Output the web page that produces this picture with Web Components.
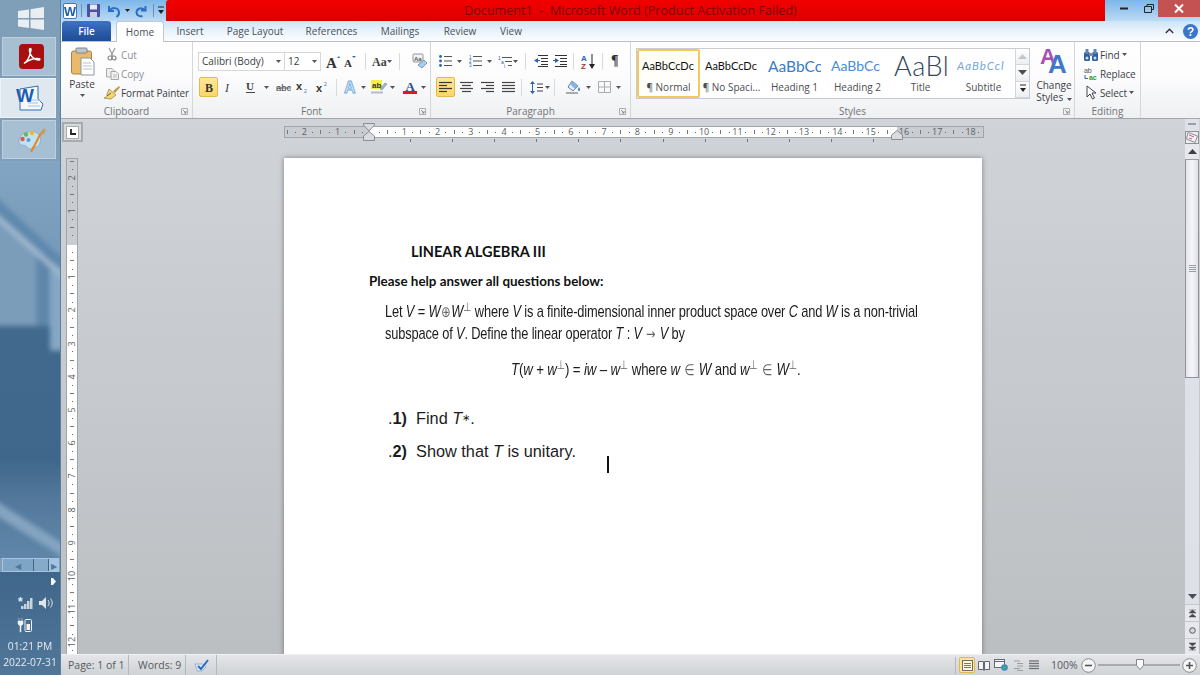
<!DOCTYPE html>
<html lang="en">
<head>
<meta charset="utf-8">
<title>Document1 - Microsoft Word</title>
<style>
html,body{margin:0;height:100%;overflow:hidden;background:#c8cbcf}
i{font-family:"Liberation Sans",sans-serif}
.perp{font-size:.72em;vertical-align:.5em;color:#666;line-height:0;font-style:normal;font-family:"DejaVu Sans",sans-serif;letter-spacing:0}
.sym{color:#666;font-family:"DejaVu Sans",sans-serif;font-size:.88em;letter-spacing:0;margin:0 1px}
.small{font-size:.6em;vertical-align:.35em;line-height:0}
</style>
</head>
<body>
<word-app>
  <desk-rail slot="rail"></desk-rail>
  <title-bar slot="main" caption="Document1  -  Microsoft Word (Product Activation Failed)"></title-bar>
  <ribbon-tabs slot="main"></ribbon-tabs>
  <word-ribbon slot="main"></word-ribbon>
  <work-space slot="main">
    <doc-page>
      <p class="title">LINEAR ALGEBRA III</p>
      <p class="ask">Please help answer all questions below:</p>
      <p class="math">Let <i>V</i> = <i>W</i><span class="sym">⊕</span><i>W</i><span class="perp">⊥</span> where <i>V</i> is a finite-dimensional inner product space over <i>C</i> and <i>W</i> is a non-trivial<br>subspace of <i>V</i>. Define the linear operator <i>T</i> : <i>V</i> <span class="sym">→</span> <i>V</i> by</p>
      <p class="math eq"><i>T</i>(<i>w</i> + <i>w</i><span class="perp">⊥</span>) = <i>iw</i> – <i>w</i><span class="perp">⊥</span> where <i>w</i> <span class="sym">∈</span> <i>W</i> and <i>w</i><span class="perp">⊥</span> <span class="sym">∈</span> <i>W</i><span class="perp">⊥</span>.</p>
      <p class="q one">.<b>1)</b>&nbsp; Find <i>T</i><span class="small">∗</span>.</p>
      <p class="q">.<b>2)</b>&nbsp; Show that <i>T</i> is unitary.</p>
    </doc-page>
  </work-space>
  <status-bar slot="main"></status-bar>
</word-app>

<script>
const SERIF = 'font-family="Liberation Serif" font-weight="bold"';
const SANS = 'font-family="Liberation Sans"';
const lines = (xs, c, sw = 1) => xs.map(([x1, y, x2]) => `<path d="M${x1} ${y}H${x2}" stroke="${c}" stroke-width="${sw}"/>`).join('');
const ICONS = {
  start: [26, 23, '<path fill="#fff" opacity=".82" d="M0 4 11 2.4V11H0zM12.5 2.2 26 0V11H12.5zM0 12.5H11V21L0 19.5zM12.5 12.5H26V23L12.5 21z"/>'],
  pdf: [25, 25, '<rect width="25" height="25" rx="4" fill="#a70f10"/><path fill="none" stroke="#fff" stroke-width="1.5" d="M5 19.5c3-2 6-7.500 7-13.500.3-2-1.600-2-1.600 0 0 5 4 9.500 9 10 2 .2 2-1.500 0-1.500-4-.2-10 1.500-14.400 5z"/>'],
  wordbig: [28, 28, `<path d="M4 5 22 2v13l5 5-2 6H4z" fill="#f4f8fc" stroke="#2f6db4"/><path d="M12 16h12M12 19h10M12 22h12" stroke="#a9c4e0"/><text x="0" y="18" font-size="19" ${SANS} font-weight="bold" fill="#1d5fb0">W</text>`],
  paint: [29, 26, '<path d="M2 15C1 8 10 3 18 5c6 2 7 8 4 13-2 3-5 1-7 3-2 2-4 0-6-2-2-1-6 0-7-4z" fill="#c2e1f1" stroke="#7aa9c7" stroke-width=".7"/><circle cx="5.500" cy="12" r="2.200" fill="#e2574c"/><circle cx="9" cy="7.500" r="2.200" fill="#69b944"/><circle cx="15" cy="6" r="2.200" fill="#f6b52e"/><circle cx="11.500" cy="13" r="2" fill="#5b9bd5"/><path d="M14 25 24 6" stroke="#e8851f" stroke-width="2"/><path d="M23 6l4-5 2 2-3 5z" fill="#c99a66"/>'],
  w: [14, 16, `<rect x=".5" y=".5" width="13" height="15" rx="1.500" fill="#fff" stroke="#3d79c2"/><text x="1" y="12.500" font-size="12" ${SANS} font-weight="bold" fill="#1b5cb0" textLength="12" lengthAdjust="spacingAndGlyphs">W</text>`],
  save: [13, 13, '<rect width="13" height="13" rx="1" fill="#4b4fa6"/><rect x="3" y=".5" width="7" height="5" fill="#e6ecf6"/><rect x="3" y="8" width="7" height="5" fill="#c9cfe0"/>'],
  undo: [12, 12, '<path d="M1 1v5h5M1.500 6C4 2 10 2 11 7c.4 2-1 4-2.500 5" fill="none" stroke="#2a6fc1" stroke-width="2"/>'],
  redo: [12, 12, '<path d="M10.500 1v4.500H6M10 5.500C7 2 2 3 1.500 7c-.2 3 3 5 6 4" fill="none" stroke="#2a6fc1" stroke-width="2"/>'],
  qcaret: [6, 8, '<path d="M0 0h6" stroke="#222"/><path d="M0 3h6L3 7z" fill="#222"/>'],
  caret: [5, 3, '<path d="M0 0h5L2.500 3z" fill="#555"/>'],
  min: [8, 3, '<rect width="8" height="2" y=".5" fill="#222"/>'],
  restore: [10, 9, '<path d="M3 2V.5h6.500v5H8M.5 2.500h7v6h-7z" fill="none" stroke="#222"/>'],
  close: [10, 9, '<path d="M1 .5 9 8.500M9 .5 1 8.500" stroke="#fff" stroke-width="2"/>'],
  chev: [9, 6, '<path d="M.8 5 4.500 1.300 8.200 5" fill="none" stroke="#333" stroke-width="1.400"/>'],
  help: [15, 15, `<circle cx="7.500" cy="7.500" r="7.500" fill="#3b76c8"/><text x="4" y="12" font-size="12" ${SANS} font-weight="bold" fill="#fff">?</text>`],
  paste: [24, 29, '<rect x=".5" y="4" width="20" height="23" rx="2" fill="#e9b96e" stroke="#a88246"/><rect x="5" y="1" width="11" height="5" rx="1" fill="#bfc5cc" stroke="#7e858c"/><path d="M10 11h9l4 4v13H10z" fill="#fff" stroke="#8c96a3"/><path d="M12 16h8M12 19h9M12 22h9" stroke="#b8c2cc"/>'],
  scissors: [10, 13, '<path d="M2 0 6 8M8 0 4 8" stroke="#9a9a9a" stroke-width="1.200"/><circle cx="3" cy="10" r="2" fill="none" stroke="#888" stroke-width="1.200"/><circle cx="7" cy="10" r="2" fill="none" stroke="#888" stroke-width="1.200"/>'],
  copy: [13, 12, '<path d="M.5.5H6l2 2V9H.5z" fill="#eee" stroke="#aaa"/><path d="M5 3.500h5l2.500 2.500v5.500H5z" fill="#f2f2f2" stroke="#a5a5a5"/><path d="M7 7h4M7 9h4" stroke="#bbb"/>'],
  brush: [16, 13, '<path d="M9 5 15 0l1 1.500L11 7z" fill="#c19a52"/><path d="M5 3 12 9 7 13 0 12c3-1 3-2 3-4z" fill="#f5d773" stroke="#8b7a3a" stroke-width=".7"/><path d="M3 10l4-3" stroke="#556"/>'],
  launch: [7, 7, '<path d="M.5.5h6v6h-6z" fill="none" stroke="#a8adb3"/><path d="M2 2l3 3M3 5h2V3" fill="none" stroke="#777" stroke-width=".8"/>'],
  grow: [14, 13, `<text x="0" y="13" font-size="15" ${SERIF} fill="#333">A</text><path d="M11 3l2-2 1 2z" fill="#2c6cb8"/>`],
  shrink: [12, 12, `<text x="0" y="12" font-size="11" ${SERIF} fill="#333">A</text><path d="M8 1h4l-2 2z" fill="#2c6cb8"/>`],
  aa: [14, 12, `<text x="0" y="11" font-size="12" ${SERIF} fill="#444">Aa</text>`],
  clear: [16, 15, `<rect x="1" y="0" width="10" height="8" rx="1" fill="#f4f4f4" stroke="#8f98a3"/><text x="2" y="7" font-size="6" ${SANS} font-weight="bold" fill="#555">Aa</text><path d="M6 11 12 6l3 3-5 5z" fill="#a9cdea" stroke="#7d99b4"/>`],
  b: [8, 11, `<text x="0" y="10" font-size="12" ${SERIF} fill="#333">B</text>`],
  it: [7, 11, `<text x="0" y="10" font-size="12" font-family="Liberation Serif" font-style="italic" fill="#444">I</text>`],
  u: [9, 12, `<text x="0" y="9" font-size="11" ${SERIF} fill="#444">U</text><path d="M0 11.500h9" stroke="#444"/>`],
  abc: [15, 10, `<text x="0" y="9" font-size="9.500" ${SANS} fill="#444">abc</text><path d="M0 6h15" stroke="#666"/>`],
  sub: [12, 11, `<text x="0" y="8" font-size="11" ${SANS} font-weight="bold" fill="#333">x</text><text x="8" y="11" font-size="5" ${SANS} fill="#3a73ba">2</text>`],
  sup: [12, 11, `<text x="0" y="10" font-size="11" ${SANS} font-weight="bold" fill="#333">x</text><text x="8" y="4" font-size="5" ${SANS} fill="#3a73ba">2</text>`],
  glow: [14, 14, `<text x="0" y="13" font-size="16" ${SANS} font-weight="bold" fill="#d6e9f8" stroke="#6fa8dc" stroke-width=".8">A</text>`],
  hilite: [16, 14, `<rect x="0" y="0" width="11" height="9" fill="#f5ef4e"/><text x="1" y="8" font-size="8" ${SANS} font-weight="bold" fill="#333">ab</text><path d="M9 9l5-6 2 1-5 6z" fill="#9ab6d4" stroke="#66809c" stroke-width=".5"/><path d="M0 12.500h12" stroke="#bbb" stroke-width="2"/>`],
  fcolor: [14, 14, `<text x="2.500" y="10.500" font-size="13" ${SERIF} fill="#1e4f91">A</text><rect y="11" width="14" height="3" fill="#e81418"/>`],
  bullets: [13, 12, '<circle cx="1.500" cy="1.500" r="1.400" fill="#2b63b0"/><circle cx="1.500" cy="6" r="1.400" fill="#2b63b0"/><circle cx="1.500" cy="10.500" r="1.400" fill="#2b63b0"/>' + lines([[5, 1.5, 13], [5, 6, 13], [5, 10.5, 13]], '#555')],
  numbers: [13, 12, `<text x="0" y="4" font-size="4.500" ${SANS} fill="#2b63b0">1</text><text x="0" y="8" font-size="4.500" ${SANS} fill="#2b63b0">2</text><text x="0" y="12" font-size="4.500" ${SANS} fill="#2b63b0">3</text>` + lines([[4, 1.5, 13], [4, 6, 13], [4, 10.5, 13]], '#555')],
  multi: [14, 13, `<text x="0" y="5" font-size="5" ${SANS} fill="#2b63b0">1</text><text x="3" y="9" font-size="5" ${SANS} fill="#2b63b0">a</text><text x="6" y="13" font-size="5" ${SANS} fill="#2b63b0">i</text>` + lines([[4, 2.5, 14], [7, 6.5, 14], [10, 10.5, 14]], '#555')],
  indentl: [14, 12, lines([[4, .5, 14], [7, 3.5, 14], [7, 6.5, 14], [7, 9.5, 14], [4, 11.5, 14]], '#333') + '<path d="M0 5.500 4 3v5z" fill="#2b63b0"/><path d="M3 5.500h3" stroke="#2b63b0"/>'],
  indentr: [14, 12, lines([[2, .5, 14], [7, 3.500, 14], [7, 6.500, 14], [7, 9.500, 14], [2, 11.500, 14]], '#333') + '<path d="M6 5.500 2 3v5z" fill="#2b63b0"/><path d="M0 5.500h3" stroke="#2b63b0"/>'],
  sort: [14, 15, `<text x="0" y="7" font-size="8" ${SANS} font-weight="bold" fill="#2b63b0">A</text><text x="0" y="15" font-size="8" ${SANS} font-weight="bold" fill="#a5342f">Z</text><path d="M11 0v13" stroke="#222"/><path d="M8 10h6l-3 5z" fill="#222"/>`],
  left: [13, 10, lines([[0, .5, 13], [0, 3.500, 8], [0, 6.500, 13], [0, 9.500, 8]], '#3a3a32', 1.200)],
  center: [13, 10, lines([[0, .5, 13], [2, 3.500, 11], [0, 6.500, 13], [2, 9.500, 11]], '#444', 1.200)],
  right: [13, 10, lines([[0, .5, 13], [5, 3.500, 13], [0, 6.500, 13], [5, 9.500, 13]], '#444', 1.200)],
  justify: [13, 10, lines([[0, .5, 13], [0, 3.500, 13], [0, 6.500, 13], [0, 9.500, 13]], '#444', 1.200)],
  spacing: [13, 13, '<path d="M0 3 2.500 0 5 3zM0 10l2.500 3L5 10z" fill="#2b63b0"/><path d="M2.500 3v7" stroke="#2b63b0"/>' + lines([[7, 3, 13], [7, 6.5, 13], [7, 10, 13]], '#444')],
  shade: [15, 14, '<path d="M6 1 12 6 7 11 2 7z" fill="#e8eef6" stroke="#5d7ea3"/><path d="M6 1 12 6 9 9 4 4z" fill="#86b4e2"/><path d="M13 7c1.500 2 1.500 4 0 4s-1.500-2 0-4z" fill="#4a88c7"/><path d="M0 13h12" stroke="#aaa" stroke-width="2"/>'],
  borders: [13, 12, '<path d="M.5.5h12v11H.5zM6.500.5v11M.5 6h12" fill="none" stroke="#a9adb1"/>'],
  aastyles: [26, 26, `<text font-size="22" ${SANS} font-weight="bold"><tspan x="0" y="16" fill="#a64fb5">A</tspan><tspan x="8" y="25" font-size="26" fill="#3f78c7">A</tspan></text>`],
  find: [14, 13, '<rect x="0" y="4" width="6" height="9" rx="1.500" fill="#2f5fa3"/><rect x="8" y="4" width="6" height="9" rx="1.500" fill="#2f5fa3"/><rect x="1.500" y="1" width="3" height="5" fill="#5c86bf"/><rect x="9.500" y="1" width="3" height="5" fill="#5c86bf"/><rect x="5" y="5" width="4" height="3" fill="#88a"/><circle cx="3" cy="10" r="1.500" fill="#cfe0f3"/><circle cx="11" cy="10" r="1.500" fill="#cfe0f3"/>'],
  replace: [14, 14, `<text x="0" y="6" font-size="7" ${SANS} fill="#555">ab</text><text x="5" y="13" font-size="7" ${SANS} font-weight="bold" fill="#2e9b2e">ac</text><path d="M1 8v3.500h3" fill="none" stroke="#2b63b0"/>`],
  select: [11, 15, '<path d="M1 1v11l3-3 2.500 5 2-1L6 8h4z" fill="#fff" stroke="#445"/>'],
  flag: [5, 7, '<path d="M0 0h2l3 3.500L2 7H0z" fill="#f3f5f7"/>'],
  signal: [15, 12, `<text x="0" y="9" font-size="12" ${SANS} font-weight="bold" fill="#e8edf2">*</text>` + [[3, 9], [6, 7], [9, 4], [12, 1]].map(([x, y]) => `<rect x="${x}" y="${y}" width="2.500" height="${12 - y}" fill="#c9d3dc"/>`).join('')],
  speaker: [14, 12, '<path d="M0 4h3l4-4v12L3 8H0z" fill="#dfe5ea"/><path d="M9 3c1.500 2 1.500 4 0 6M11.500 1.500c2.300 3 2.300 6 0 9" fill="none" stroke="#dfe5ea"/>'],
  power: [14, 14, '<path d="M1 0v3M4 0v3M0 3h5v3L3 8v6H2V8L0 6z" fill="#f0f3f6" stroke="#f0f3f6" stroke-width=".5"/><rect x="7" y="1.500" width="6.500" height="12" rx="1" fill="none" stroke="#f0f3f6"/><rect x="8.500" y="6" width="3.500" height="6" fill="#f0f3f6"/>'],
  rulerview: [12, 11, '<path d="M2 .5 11.500 4 9 10.500 .5 7z" fill="#f7f4f5" stroke="#888"/><path d="M3 3l5 2M3 6l3 1" stroke="#c58"/>'],
  proof: [15, 12, '<path d="M1 5h8l3 3-4 4H3z" fill="#dbe6f3" stroke="#7e96b8" stroke-width=".6"/><path d="M4 7l3 3 7-9" fill="none" stroke="#2f6cc0" stroke-width="2"/>'],
  vprint: [11, 11, '<rect x=".5" y=".5" width="10" height="10" fill="#fff8dc" stroke="#6f6f60"/><path d="M2 3.500h7M2 5.500h7M2 7.500h7" stroke="#777"/>'],
  vread: [12, 11, '<path d="M.5 1.500h5v8h-5zM6.500 1.500h5v8h-5z" fill="#f5f5f5" stroke="#667"/><path d="M6 9v2" stroke="#667"/>'],
  vweb: [14, 12, '<rect x=".5" y=".5" width="10" height="8" fill="#f5f5f5" stroke="#667"/><path d="M1 2.500h9" stroke="#667"/><circle cx="10.500" cy="8.500" r="3.300" fill="#3d8cc5"/><path d="M9 7.500h3v2H9z" fill="#4eb04e"/>'],
  voutline: [9, 11, lines([[0, 1, 6], [3, 3.5, 9], [3, 6, 9], [0, 8.5, 6], [3, 10.5, 9]], '#9a9fa4')],
  vdraft: [10, 10, lines([[0, 1, 10], [0, 3.500, 10], [0, 6, 10], [0, 8.500, 10]], '#6e7277', 1.300)],
  upa: [9, 5, '<path d="M0 5 4.500 0 9 5z" fill="#3a3d41"/>'],
  downa: [9, 5, '<path d="M0 0h9L4.500 5z" fill="#4b4e52"/>'],
  prevpg: [7, 8, '<path d="M0 1h7M0 4l3.500-3L7 4zM0 8l3.500-3L7 8z" fill="#45484c" stroke="#45484c" stroke-width=".5"/>'],
  nextpg: [7, 8, '<path d="M0 7h7M0 4l3.500 3L7 4zM0 0l3.500 3L7 0z" fill="#45484c" stroke="#45484c" stroke-width=".5"/>'],
  browse: [7, 7, '<circle cx="3.500" cy="3.500" r="2.800" fill="#d5d8dc" stroke="#55585c"/>'],
  grip: [7, 7, lines([[0, .5, 7], [0, 2.500, 7], [0, 4.500, 7], [0, 6.500, 7]], '#9a9da2')],
  minus: [15, 15, '<circle cx="7.500" cy="7.500" r="6.800" fill="#f4f5f7" stroke="#8a8e93"/><path d="M4 7.500h7" stroke="#555" stroke-width="1.600"/>'],
  plus: [15, 15, '<circle cx="7.500" cy="7.500" r="6.800" fill="#f4f5f7" stroke="#8a8e93"/><path d="M4 7.500h7M7.500 4v7" stroke="#555" stroke-width="1.600"/>'],
  thumb: [8, 11, '<path d="M.5.500h7v6L4 10.500.5 6.500z" fill="#f8f9fa" stroke="#83878c"/>'],
  hourtop: [12, 9, '<path d="M.5.500h11V2L6 8 .5 2z" fill="#d9dcdf" stroke="#8a8e93"/>'],
  hourbot: [12, 10, '<path d="M6 .5 11.500 5v4.500H.5V5z" fill="#d9dcdf" stroke="#8a8e93"/>'],
  tabstop: [6, 6, '<path d="M1 0v5h5" fill="none" stroke="#222" stroke-width="1.800"/>'],
};

customElements.define('ms-icon', class extends HTMLElement {
  constructor() {
    super();
    const [w, h, inner] = ICONS[this.getAttribute('name')];
    this.attachShadow({ mode: 'open' }).innerHTML = `
      <style>:host{display:inline-flex;flex:none;line-height:0}svg{overflow:visible}</style>
      <svg xmlns="http://www.w3.org/2000/svg" width="${w}" height="${h}" viewBox="0 0 ${w} ${h}">${inner}</svg>`;
  }
});

customElements.define('word-app', class extends HTMLElement {
  constructor() {
    super();
    this.attachShadow({ mode: 'open' }).innerHTML = `
      <style>
      :host{display:grid;grid-template-columns:61px 1fr;width:1200px;height:675px;overflow:hidden;
        font:10px "Open Sans",sans-serif;color:#4a4e53;filter:blur(.3px)}
      main{display:flex;flex-direction:column;min-width:0;height:675px}
      </style>
      <slot name="rail"></slot>
      <main><slot name="main"></slot></main>`;
  }
});

customElements.define('desk-rail', class extends HTMLElement {
  constructor() {
    super();
    this.attachShadow({ mode: 'open' }).innerHTML = `
      <style>
      :host{display:flex;flex-direction:column;height:675px;background:#7f9fb9;border-right:1px solid #5d7f9d;box-sizing:border-box}
      .start{height:37px;display:flex;align-items:center;padding-left:18px;box-sizing:border-box}
      .tile{height:39px;margin:0 4px 2px 2px;display:flex;align-items:center;justify-content:center;
        background:#a7bfd3;border:1px solid #bdd0df;box-sizing:border-box}
      .tile.on{background:#dfe8ef;border-color:#eef3f7;margin-left:0;height:40px}
      .tile ms-icon{margin-left:4px}
      .wall{flex:1;min-height:0;line-height:0}
      .bar{height:14px;display:flex;margin:0 1px 0 2px;background:#7fa5c6;border:1px solid #a9c5dc;box-sizing:border-box}
      .bar span{display:flex;align-items:center;justify-content:center;color:#4f7a9f;font-size:8px}
      .bar .l{width:30px}
      .bar .m{width:14px;border:solid #3f6688;border-width:0 1px;background:#86aac9}
      .bar .r{flex:1;background:#a4c3df}
      .tray{height:103px;background:linear-gradient(#3f678b,#517698);color:#e4ebf2;display:flex;flex-direction:column;
        font:10.500px "Open Sans",sans-serif;text-align:center;white-space:nowrap}
      .row{display:flex;gap:6px;padding-left:18px;height:22px;align-items:center}
      .flag{padding:6px 0 0 47px;height:14px;line-height:0}
      .clock{margin-top:3px;line-height:15px;font-size:10.300px}
      .date{line-height:17px;font-size:10.300px}
      </style>
      <div class="start"><ms-icon name="start"></ms-icon></div>
      <div class="tile"><ms-icon name="pdf"></ms-icon></div>
      <div class="tile on"><ms-icon name="wordbig"></ms-icon></div>
      <div class="tile"><ms-icon name="paint"></ms-icon></div>
      <div class="wall">
        <svg xmlns="http://www.w3.org/2000/svg" width="60" height="100%" viewBox="0 0 60 398" preserveAspectRatio="none">
          <defs>
            <linearGradient id="g" x1="0" y1="0" x2="0" y2="1">
              <stop offset="0" stop-color="#82a5c3"/><stop offset=".3" stop-color="#7397b6"/>
              <stop offset=".43" stop-color="#41698d"/><stop offset=".75" stop-color="#3f678b"/>
              <stop offset=".86" stop-color="#54799c"/><stop offset="1" stop-color="#5f86a8"/>
            </linearGradient>
            <filter id="b"><feGaussianBlur stdDeviation="2.500"/></filter>
          </defs>
          <rect width="60" height="398" fill="url(#g)"/>
          <g filter="url(#b)">
            <path d="M-5 75H36V165H-5z" fill="#7c9dba"/>
            <path d="M36 95H50V165H36z" fill="#5f87aa"/>
            <path d="M50 105H65V190H50z" fill="#85a7c5"/>
            <path d="M-5 35 65 100V112L-5 50z" fill="#5f88ae"/>
            <path d="M-5 52 65 114V120L-5 58z" fill="#a2bad0"/>
            <path d="M-5 340 65 385V398L-5 355z" fill="#84a4c2"/>
          </g>
        </svg>
      </div>
      <div class="bar"><span class="l">◀</span><span class="m"></span><span class="r">▶</span></div>
      <div class="tray">
        <div class="flag"><ms-icon name="flag"></ms-icon></div>
        <div class="row"><ms-icon name="signal"></ms-icon><ms-icon name="speaker"></ms-icon></div>
        <div class="row"><ms-icon name="power"></ms-icon></div>
        <div class="clock">01:21 PM</div>
        <div class="date">2022-07-31</div>
      </div>`;
  }
});

customElements.define('title-bar', class extends HTMLElement {
  constructor() {
    super();
    this.attachShadow({ mode: 'open' }).innerHTML = `
      <style>
      :host{display:flex;align-items:flex-start;height:21px;flex:none;background:linear-gradient(#7db7ea,#bcdaf4)}
      .qat{display:flex;align-items:center;width:105px;height:21px;flex:none}
      .sep{width:1px;height:13px;background:#6f8ea9;flex:none}
      .red{flex:none;width:939px;height:21px;border-radius:3px 0 0 0;background:linear-gradient(#f20000,#e40000 70%,#d40000);
        color:#7c0709;font:12.600px "Open Sans",sans-serif;text-align:center;line-height:21px;white-space:pre;text-indent:-10px}
      .win{display:flex;align-items:center;flex:1;height:17px}
      .close{margin-left:auto;width:42px;height:17px;background:#c45252;display:flex;align-items:center;justify-content:center}
      </style>
      <div class="qat">
        <ms-icon name="w" style="margin-left:2px"></ms-icon>
        <span class="sep" style="margin-left:4px"></span>
        <ms-icon name="save" style="margin-left:5px"></ms-icon>
        <ms-icon name="undo" style="margin-left:8px"></ms-icon>
        <ms-icon name="caret" style="margin-left:5px;filter:brightness(.4)"></ms-icon>
        <ms-icon name="redo" style="margin-left:5px"></ms-icon>
        <span class="sep" style="margin-left:6px"></span>
        <ms-icon name="qcaret" style="margin-left:4px"></ms-icon>
      </div>
      <div class="red">${this.getAttribute('caption')}</div>
      <div class="win">
        <ms-icon name="min" style="margin-left:15px"></ms-icon>
        <ms-icon name="restore" style="margin-left:16px"></ms-icon>
        <span class="close"><ms-icon name="close"></ms-icon></span>
      </div>`;
  }
});

customElements.define('ribbon-tabs', class extends HTMLElement {
  constructor() {
    super();
    const tabs = [['Insert', 50], ['Page Layout', 80], ['References', 73], ['Mailings', 64], ['Review', 56], ['View', 46]];
    this.attachShadow({ mode: 'open' }).innerHTML = `
      <style>
      :host{display:flex;align-items:flex-end;height:21px;flex:none;background:linear-gradient(#cfe4f7,#eef5fc 60%,#fbfdff);
        border-bottom:1px solid #bcc0c4;box-sizing:border-box;font:10px "Open Sans",sans-serif;color:#4a5058}
      span{display:block;text-align:center;line-height:19px;height:19px;flex:none;white-space:nowrap}
      .file{width:49px;margin-left:1px;height:20px;line-height:20px;border-radius:3px 3px 0 0;color:#fff;font-weight:600;
        background:linear-gradient(#3e73c4,#2a5aa6 60%,#1f4c96)}
      .home{width:48px;margin-left:5px;height:21px;line-height:21px;background:#fff;border:1px solid #c3c7cb;border-bottom:0;
        border-radius:3px 3px 0 0;box-sizing:border-box;margin-bottom:-1px}
      .r{margin-left:auto;display:flex;align-items:center;height:20px;gap:9px;padding-right:2px;align-self:center}
      </style>
      <span class="file">File</span><span class="home">Home</span>
      ${tabs.map(([t, w], i) => `<span style="width:${w}px${i ? '' : ';margin-left:1px'}">${t}</span>`).join('')}
      <div class="r"><ms-icon name="chev"></ms-icon><ms-icon name="help"></ms-icon></div>`;
  }
});

customElements.define('ribbon-group', class extends HTMLElement {
  constructor() {
    super();
    const launcher = this.hasAttribute('launcher') ? '<ms-icon class="lau" name="launch"></ms-icon>' : '';
    this.attachShadow({ mode: 'open' }).innerHTML = `
      <style>
      :host{display:flex;flex-direction:column;flex:none;position:relative;box-sizing:border-box;height:76px;border-right:1px solid #d3d6da}
      .body{flex:1;min-height:0}
      .lab{height:14px;line-height:14px;text-align:center;color:#6e7378;font-size:10px}
      .lau{position:absolute;right:4px;bottom:3px}
      </style>
      <div class="body"><slot></slot></div>
      <div class="lab">${this.getAttribute('label')}</div>${launcher}`;
  }
});

customElements.define('style-tile', class extends HTMLElement {
  constructor() {
    super();
    this.attachShadow({ mode: 'open' }).innerHTML = `
      <style>
      :host{display:flex;flex-direction:column;flex:none;width:63px;height:49px;box-sizing:border-box;border:2px solid transparent;overflow:hidden}
      :host([on]){border-color:#f1c95f;border-radius:2px;background:linear-gradient(#fffdf2,#fff)}
      .s{height:29px;display:flex;align-items:center;justify-content:center;overflow:hidden;white-space:nowrap}
      .s div{width:53px;overflow:hidden}
      .n{text-align:center;font-size:10px;color:#4a4e53;line-height:14px;white-space:nowrap}
      </style>
      <div class="s"><div><slot></slot></div></div>
      <div class="n">${this.getAttribute('name')}</div>`;
  }
});

customElements.define('word-ribbon', class extends HTMLElement {
  constructor() {
    super();
    this.attachShadow({ mode: 'open' }).innerHTML = `
      <style>
      :host{display:flex;height:77px;flex:none;background:linear-gradient(#fff,#fcfcfd 45%,#eef0f2);border-bottom:1px solid #a2a6aa;box-sizing:border-box}
      .row{display:flex;align-items:center;height:22px}
      .rows{padding-top:8px;display:flex;flex-direction:column;gap:4px}
      .clip{display:flex;height:100%}
      .paste{width:42px;display:flex;flex-direction:column;align-items:center;padding-top:5px;box-sizing:border-box}
      .paste div{margin-top:1px;line-height:14px;color:#3c4045}
      .paste ms-icon:last-child{margin-top:3px}
      .small{padding-top:3px}
      .small div{display:flex;align-items:center;height:19px;color:#3c4045;white-space:nowrap;letter-spacing:-.12px}
      .small .ic{width:18px;display:flex;justify-content:center;flex:none}
      .dim{color:#8c9095 !important}
      .combo{height:19px;box-sizing:border-box;border:1px solid #d5d8db;background:#fff;display:flex;align-items:center;
        padding:0 3px;color:#3a3e43;justify-content:space-between;flex:none}
      .sep{width:1px;height:17px;background:#d8dade;flex:none}
      .hot{display:flex;align-items:center;justify-content:center;height:20px;width:19px;box-sizing:border-box;flex:none;
        border:1px solid #e3b84f;border-radius:2px;background:linear-gradient(#fde89a,#fbd769)}
      .pil{font:bold 14px "Liberation Serif",serif;color:#333;margin-left:8px}
      .gal{display:flex;margin:6px 0 0 5px;width:394px;height:51px;box-sizing:border-box;border:1px solid #c8cbcf;background:#fff}
      .gal .tiles{display:flex;width:380px;overflow:hidden}
      .arrows{width:13px;display:flex;flex-direction:column;border-left:1px solid #d3d6da;margin-left:auto}
      .arrows span{flex:1;display:flex;align-items:center;justify-content:center;border-bottom:1px solid #d3d6da;background:linear-gradient(#fff,#eceef0)}
      .styles{display:flex}
      .chg{margin:6px 0 0 4px;width:40px;text-align:center;line-height:12px;color:#3c4045;white-space:nowrap}
      .chg ms-icon{margin-left:6px;margin-bottom:5px;display:flex}
      .chg ms-icon.c{display:inline-flex;margin:0 0 2px 1px}
      .edit .small div .ic{width:16px;margin-left:8px;margin-right:1px}
      .s1{font:11px Lato,sans-serif;color:#111}
      .s3{font:15.500px Lato,sans-serif;color:#3b7cc4}
      .s4{font:14px Lato,sans-serif;color:#4a8bd4}
      .s5{font:300 27px Lato,sans-serif;color:#36465a;letter-spacing:.5px}
      .s6{font:italic 11.500px Lato,sans-serif;color:#77a7dd;letter-spacing:1px}
      </style>
      <ribbon-group label="Clipboard" launcher style="width:132px">
        <div class="clip">
          <div class="paste"><ms-icon name="paste" style="margin-left:2px"></ms-icon><div>Paste</div><ms-icon name="caret"></ms-icon></div>
          <div class="small">
            <div class="dim"><span class="ic"><ms-icon name="scissors"></ms-icon></span>Cut</div>
            <div class="dim"><span class="ic"><ms-icon name="copy"></ms-icon></span>Copy</div>
            <div><span class="ic"><ms-icon name="brush"></ms-icon></span>Format Painter</div>
          </div>
        </div>
      </ribbon-group>
      <ribbon-group label="Font" launcher style="width:238px">
        <div class="rows">
          <div class="row">
            <span class="combo" style="width:87px;margin-left:5px">Calibri (Body)<ms-icon name="caret"></ms-icon></span>
            <span class="combo" style="width:37px;margin-left:-1px">12<ms-icon name="caret"></ms-icon></span>
            <ms-icon name="grow" style="margin-left:5px"></ms-icon>
            <ms-icon name="shrink" style="margin-left:4px"></ms-icon>
            <span class="sep" style="margin-left:9px"></span>
            <ms-icon name="aa" style="margin-left:6px"></ms-icon>
            <ms-icon name="caret" style="margin-left:1px"></ms-icon>
            <span class="sep" style="margin-left:7px"></span>
            <ms-icon name="clear" style="margin-left:12px"></ms-icon>
          </div>
          <div class="row">
            <span class="hot" style="margin-left:6px"><ms-icon name="b"></ms-icon></span>
            <ms-icon name="it" style="margin-left:7px"></ms-icon>
            <ms-icon name="u" style="margin-left:14px"></ms-icon>
            <ms-icon name="caret" style="margin-left:9px"></ms-icon>
            <ms-icon name="abc" style="margin-left:7px"></ms-icon>
            <ms-icon name="sub" style="margin-left:5px"></ms-icon>
            <ms-icon name="sup" style="margin-left:8px"></ms-icon>
            <span class="sep" style="margin-left:8px"></span>
            <ms-icon name="glow" style="margin-left:7px"></ms-icon>
            <ms-icon name="caret" style="margin-left:3px"></ms-icon>
            <ms-icon name="hilite" style="margin-left:5px"></ms-icon>
            <ms-icon name="caret" style="margin-left:3px"></ms-icon>
            <ms-icon name="fcolor" style="margin-left:8px"></ms-icon>
            <ms-icon name="caret" style="margin-left:4px"></ms-icon>
          </div>
        </div>
      </ribbon-group>
      <ribbon-group label="Paragraph" launcher style="width:200px">
        <div class="rows">
          <div class="row">
            <ms-icon name="bullets" style="margin-left:8px"></ms-icon>
            <ms-icon name="caret" style="margin-left:5px"></ms-icon>
            <ms-icon name="numbers" style="margin-left:7px"></ms-icon>
            <ms-icon name="caret" style="margin-left:5px"></ms-icon>
            <ms-icon name="multi" style="margin-left:6px"></ms-icon>
            <ms-icon name="caret" style="margin-left:1px"></ms-icon>
            <span class="sep" style="margin-left:7px"></span>
            <ms-icon name="indentl" style="margin-left:8px"></ms-icon>
            <ms-icon name="indentr" style="margin-left:5px"></ms-icon>
            <span class="sep" style="margin-left:6px"></span>
            <ms-icon name="sort" style="margin-left:7px"></ms-icon>
            <span class="sep" style="margin-left:7px"></span>
            <span class="pil">¶</span>
          </div>
          <div class="row">
            <span class="hot" style="margin-left:5px"><ms-icon name="left"></ms-icon></span>
            <ms-icon name="center" style="margin-left:5px"></ms-icon>
            <ms-icon name="right" style="margin-left:8px"></ms-icon>
            <ms-icon name="justify" style="margin-left:8px"></ms-icon>
            <span class="sep" style="margin-left:6px"></span>
            <ms-icon name="spacing" style="margin-left:8px"></ms-icon>
            <ms-icon name="caret" style="margin-left:2px"></ms-icon>
            <span class="sep" style="margin-left:4px"></span>
            <ms-icon name="shade" style="margin-left:11px"></ms-icon>
            <ms-icon name="caret" style="margin-left:5px"></ms-icon>
            <ms-icon name="borders" style="margin-left:7px"></ms-icon>
            <ms-icon name="caret" style="margin-left:5px"></ms-icon>
          </div>
        </div>
      </ribbon-group>
      <ribbon-group label="Styles" launcher style="width:444px">
        <div class="styles">
          <div class="gal">
            <div class="tiles">
              <style-tile name="¶ Normal" on><span class="s1">AaBbCcDc</span></style-tile>
              <style-tile name="¶ No Spaci..."><span class="s1">AaBbCcDc</span></style-tile>
              <style-tile name="Heading 1"><span class="s3">AaBbCc</span></style-tile>
              <style-tile name="Heading 2"><span class="s4">AaBbCc</span></style-tile>
              <style-tile name="Title"><span class="s5">AaBl</span></style-tile>
              <style-tile name="Subtitle"><span class="s6">AaBbCcl</span></style-tile>
            </div>
            <div class="arrows">
              <span><ms-icon name="upa" style="opacity:.25"></ms-icon></span>
              <span><ms-icon name="downa"></ms-icon></span>
              <span><ms-icon name="qcaret"></ms-icon></span>
            </div>
          </div>
          <div class="chg"><ms-icon name="aastyles"></ms-icon>Change<br>Styles <ms-icon class="c" name="caret"></ms-icon></div>
        </div>
      </ribbon-group>
      <ribbon-group label="Editing" class="edit" style="width:66px">
        <div class="small edit">
          <div><span class="ic"><ms-icon name="find"></ms-icon></span>Find&nbsp;<ms-icon name="caret"></ms-icon></div>
          <div><span class="ic"><ms-icon name="replace"></ms-icon></span>Replace</div>
          <div><span class="ic"><ms-icon name="select"></ms-icon></span>Select&nbsp;<ms-icon name="caret"></ms-icon></div>
        </div>
      </ribbon-group>`;
  }
});

// one cell per quarter unit, label on the whole units
function rulerCell(i, zero) {
  const q = i - zero;
  if (q === 0) return '';
  if (q % 4 === 0) return `<em>${Math.abs(q / 4)}</em>`;
  return q % 2 === 0 ? '<u></u>' : '<s></s>';
}

customElements.define('h-ruler', class extends HTMLElement {
  constructor() {
    super();
    const cells = Array.from({ length: 84 }, (_, i) => `<b>${rulerCell(i, 10)}</b>`).join('');
    this.attachShadow({ mode: 'open' }).innerHTML = `
      <style>
      :host{display:block;position:relative;width:700px;height:12px;box-sizing:border-box;border:1px solid #a2a5a9;
        background:linear-gradient(90deg,#c9ccd0 84px,#fff 84px,#fff 612px,#c9ccd0 612px)}
      .cells{display:grid;grid-template-columns:repeat(84,8.333px);height:10px;margin-left:-1.500px}
      b{display:flex;align-items:center;justify-content:center;font:normal 9px "Open Sans",sans-serif;color:#5a5e63;overflow:visible;width:8.333px}
      em{font-style:normal;line-height:10px}
      u{display:block;width:1px;height:4px;background:#777}
      s{display:block;width:1px;height:1px;background:#666}
      .stops{position:absolute;left:125px;top:12px;width:475px;height:3px;
        background:repeating-linear-gradient(90deg,#777 0 1px,transparent 1px 42.100px)}
      .a{position:absolute;left:78px;top:-4px;display:flex;flex-direction:column;gap:0}
      .a ms-icon:last-child{margin-top:-1px}
      .b{position:absolute;left:606px;top:2px}
      </style>
      <div class="cells">${cells}</div>
      <div class="stops"></div>
      <div class="a"><ms-icon name="hourtop"></ms-icon><ms-icon name="hourbot"></ms-icon></div>
      <div class="b"><ms-icon name="hourbot"></ms-icon></div>`;
  }
});

customElements.define('v-ruler', class extends HTMLElement {
  constructor() {
    super();
    const cells = Array.from({ length: 60 }, (_, i) => `<b>${rulerCell(i, 10)}</b>`).join('');
    this.attachShadow({ mode: 'open' }).innerHTML = `
      <style>
      :host{display:block;width:12px;height:497px;box-sizing:border-box;border:1px solid #a2a5a9;border-bottom:0;overflow:hidden;
        background:linear-gradient(#c9ccd0 86px,#fff 86px)}
      b{display:flex;align-items:center;justify-content:center;height:8.300px;width:10px;font:normal 9px "Open Sans",sans-serif;color:#5a5e63}
      em{font-style:normal;display:block;transform:rotate(-90deg);line-height:8px}
      u{display:block;width:4px;height:1px;background:#777}
      s{display:block;width:1px;height:1px;background:#666}
      .cells{margin-top:-2px}
      </style>
      <div class="cells">${cells}</div>`;
  }
});

customElements.define('doc-page', class extends HTMLElement {
  constructor() {
    super();
    this.attachShadow({ mode: 'open' }).innerHTML = `
      <style>
      :host{display:block;position:relative;width:698px;height:600px;background:#fff;box-shadow:0 0 5px rgba(60,60,60,.55);
        padding-top:84px;box-sizing:border-box;color:#1c1c1c}
      ::slotted(p){margin:0;white-space:nowrap}
      ::slotted(.title){font:bold 14.500px/20px Lato,sans-serif;padding-left:127px;color:#111}
      ::slotted(.ask){font:bold 13.400px/20px Lato,sans-serif;padding-left:85px;margin-top:9px;color:#111}
      ::slotted(.math){font:17px/21px "Liberation Sans",sans-serif;margin:10px 0 0 101px;letter-spacing:-.2px;transform:scaleX(.755);transform-origin:0 0}
      ::slotted(.eq){margin:14px 0 0 227px;transform:scaleX(.78)}
      ::slotted(.q){font:16.300px/21px "Liberation Sans",sans-serif;padding-left:104px;margin-top:12px}
      ::slotted(.one){margin-top:27px}
      .caret{position:absolute;left:323px;top:298px;width:2px;height:17px;background:#111}
      </style>
      <slot></slot>
      <div class="caret"></div>`;
  }
});

customElements.define('v-scroll', class extends HTMLElement {
  constructor() {
    super();
    this.attachShadow({ mode: 'open' }).innerHTML = `
      <style>
      :host{display:flex;flex-direction:column;align-items:stretch;width:14px;height:536px;background:#dee1e8}
      .split{height:5px;margin-top:4px;border-top:2px solid #9a9da2;margin-left:3px;margin-right:3px}
      .view{height:13px;border:1px solid #8e9195;background:#eceef1;box-sizing:border-box;display:flex;align-items:center;justify-content:center;margin-top:1px}
      span{display:flex;align-items:center;justify-content:center;flex:none;background:#e6e8ed}
      .thumb{height:219px;margin-top:0;border:1px solid #8f9296;border-top-color:#9a9da1;box-sizing:border-box;background:linear-gradient(90deg,#e2e5ea,#f5f6f8 50%,#dde0e6)}
      .fill{flex:1;background:#dee1e8}
      .b{height:16px;border-top:1px solid #c5c8cd}
      </style>
      <div class="split"></div>
      <div class="view"><ms-icon name="rulerview"></ms-icon></div>
      <span style="height:15px"><ms-icon name="upa"></ms-icon></span>
      <span class="thumb"><ms-icon name="grip"></ms-icon></span>
      <div class="fill"></div>
      <span style="height:15px;background:#dee1e8"><ms-icon name="downa"></ms-icon></span>
      <span class="b"><ms-icon name="prevpg"></ms-icon></span>
      <span class="b"><ms-icon name="browse"></ms-icon></span>
      <span class="b"><ms-icon name="nextpg"></ms-icon></span>`;
  }
});

customElements.define('work-space', class extends HTMLElement {
  constructor() {
    super();
    this.attachShadow({ mode: 'open' }).innerHTML = `
      <style>
      :host{display:grid;grid-template-columns:223px 700px 1fr;grid-template-rows:39px 1fr;flex:1;min-height:0;overflow:hidden;
        background:linear-gradient(#d0d3d8,#bcbfc2)}
      .corner{width:21px;height:20px;margin:3px 0 0 1px;border:2px solid #a7aaae;box-sizing:border-box;background:#d6d9dc;
        display:flex;align-items:center;justify-content:center}
      .corner div{width:11px;height:11px;background:#fff;border:1px solid #aaa;display:flex;align-items:center;justify-content:center}
      .top{padding-top:7px}
      .left{padding-left:5px}
      .sb{grid-row:1/3;grid-column:3;justify-self:end;margin-right:1px}
      </style>
      <div class="corner"><div><ms-icon name="tabstop"></ms-icon></div></div>
      <div class="top"><h-ruler></h-ruler></div>
      <v-scroll class="sb"></v-scroll>
      <div class="left"><v-ruler></v-ruler></div>
      <div><slot></slot></div>`;
  }
});

customElements.define('status-bar', class extends HTMLElement {
  constructor() {
    super();
    this.attachShadow({ mode: 'open' }).innerHTML = `
      <style>
      :host{display:flex;align-items:center;height:21px;flex:none;background:linear-gradient(#e4e6e9,#cfd2d5);border-top:1px solid #eef0f2;
        box-sizing:border-box;color:#55595e;font:10.500px "Open Sans",sans-serif;white-space:nowrap}
      .cell{height:20px;display:flex;align-items:center;border-right:1px solid #b5b8bc;box-sizing:border-box}
      .right{display:flex;align-items:center;margin-left:auto}
      .hot{display:flex;align-items:center;justify-content:center;width:16px;height:16px;box-sizing:border-box;border:1px solid #e3b84f;border-radius:2px;background:#fbe69a}
      .track{width:82px;height:2px;background:#a7abaf;position:relative;margin:0 0 0 2px}
      .track ms-icon{position:absolute;left:38px;top:-5px}
      </style>
      <div class="cell" style="width:68px;padding-left:7px">Page: 1 of 1</div>
      <div class="cell" style="width:57px;padding-left:9px">Words: 9</div>
      <div class="cell" style="width:31px;padding-left:8px"><ms-icon name="proof"></ms-icon></div>
      <div class="right">
        <span class="cell" style="height:17px;margin-right:3px"></span>
        <span class="hot"><ms-icon name="vprint"></ms-icon></span>
        <ms-icon name="vread" style="margin-left:3px"></ms-icon>
        <ms-icon name="vweb" style="margin-left:4px"></ms-icon>
        <ms-icon name="voutline" style="margin-left:6px"></ms-icon>
        <ms-icon name="vdraft" style="margin-left:6px"></ms-icon>
        <span style="margin-left:12px;width:25px">100%</span>
        <ms-icon name="minus" style="margin-left:5px"></ms-icon>
        <span class="track"><ms-icon name="thumb"></ms-icon></span>
        <ms-icon name="plus" style="margin:0 3px 0 2px"></ms-icon>
      </div>`;
  }
});
</script>
</body>
</html>
